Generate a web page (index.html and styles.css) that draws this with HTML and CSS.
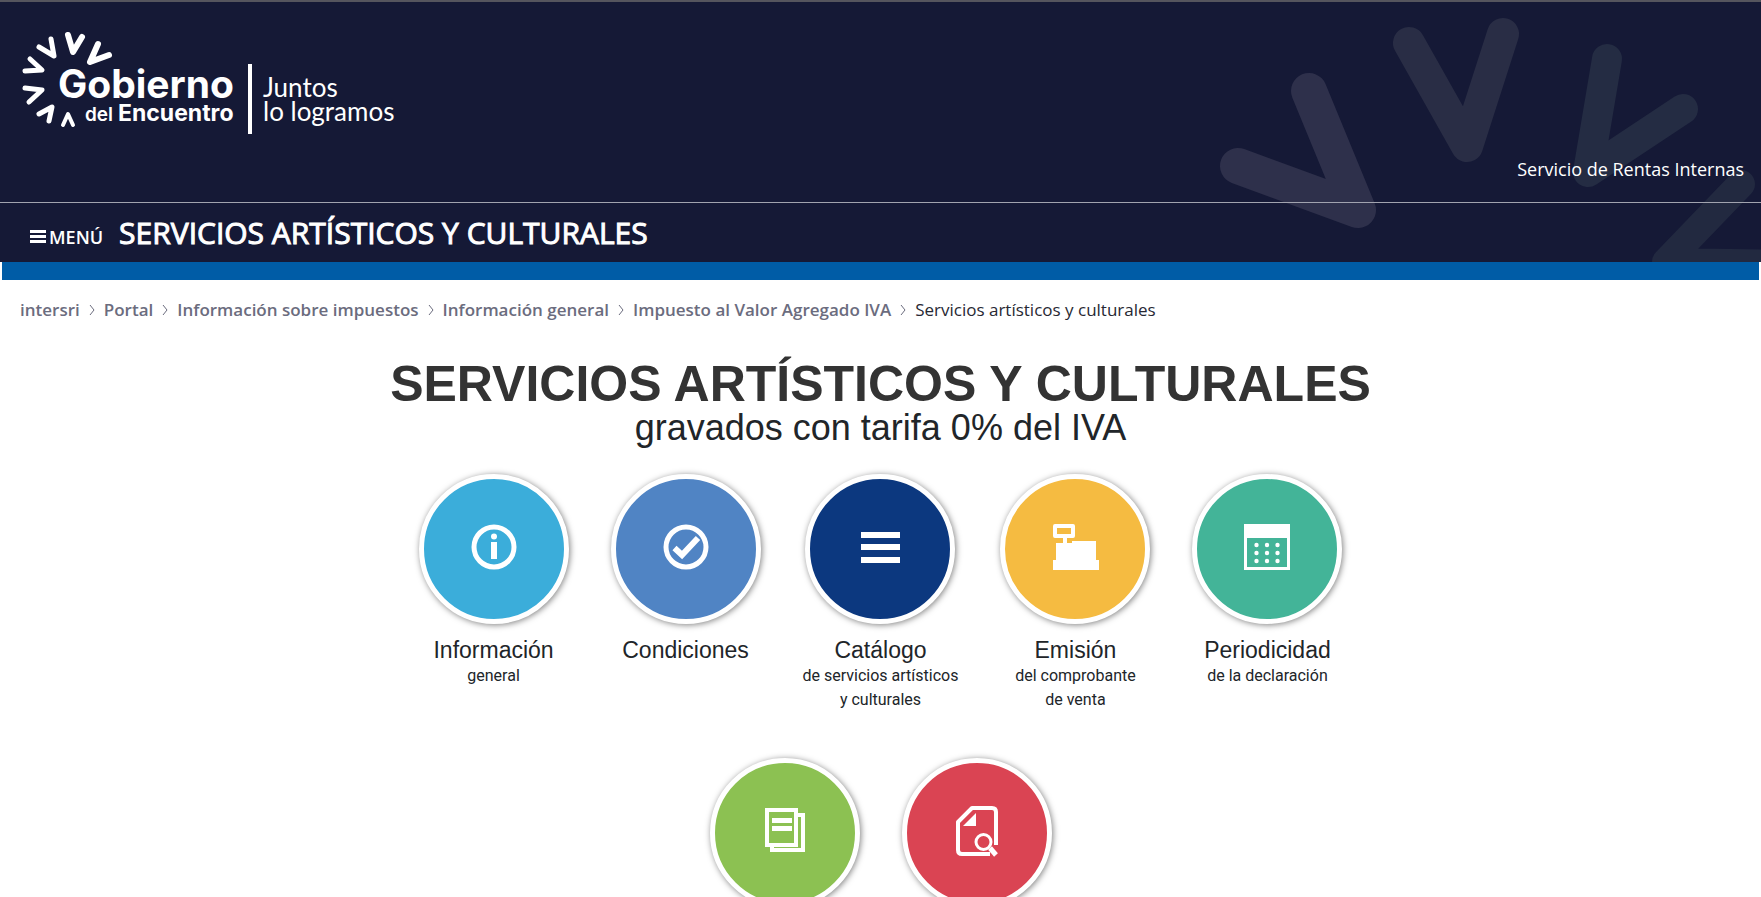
FILE: index.html
```html
<!DOCTYPE html>
<html lang="es">
<head>
<meta charset="utf-8">
<title>Servicios artísticos y culturales</title>
<link rel="stylesheet" href="styles.css">
</head>
<body>
<header class="header">
  <svg class="header-art" width="560" height="262" viewBox="1201 0 560 262" fill="none" stroke-linecap="round" stroke-linejoin="round" aria-hidden="true">
    <path stroke="#2e304b" stroke-width="36" d="M1238 166 1358 210 1309 91"/>
    <path stroke="#292d45" stroke-width="32" d="M1409 43 1467 146 1503 34"/>
    <path stroke="#242c43" stroke-width="30" d="M1607 59 1588 172 1683 109"/>
    <path stroke="#222940" stroke-width="28" d="M1741 184 1666 262 1790 264"/>
  </svg>
  <div class="header-brand">
    <svg class="logo" width="420" height="116" viewBox="0 22 420 116" role="img" aria-label="Gobierno del Encuentro, Juntos lo logramos">
      <g fill="none" stroke="#fff" stroke-width="6" stroke-linecap="round" stroke-linejoin="round">
        <path d="M68 35 73 52 82 37"/>
        <path stroke-width="5" d="M51 39 54 56 39 47"/>
        <path stroke-width="5" d="M30 59 42 70 25 71"/>
        <path stroke-width="5" d="M25 88 42 90 29 102"/>
        <path stroke-width="5" d="M39 114 52 107 49 121"/>
        <path stroke-width="4" d="M63 125 68 114 73 125"/>
        <path d="M98 44 90 62 109 55"/>
      </g>
      <text class="logo-main" x="58" y="98">Gobierno</text>
      <text class="logo-del" x="85" y="121">del</text>
      <text class="logo-sub" x="118" y="121">Encuentro</text>
      <path fill="#fff" d="M248 64h4v70h-4z"/>
      <text class="logo-motto" x="263" y="97">Juntos</text>
      <text class="logo-motto" x="263" y="121">lo logramos</text>
    </svg>
    <span class="agency">Servicio de Rentas Internas</span>
  </div>
  <div class="header-nav">
    <button class="menu" type="button">
      <svg width="16" height="14" viewBox="0 0 16 14" aria-hidden="true"><path fill="#fff" d="M0 0h16v3H0zM0 5h16v3H0zM0 10h16v3H0z"/></svg>
      MENÚ
    </button>
    <span class="section-title">SERVICIOS ARTÍSTICOS Y CULTURALES</span>
  </div>
</header>
<div class="band"></div>
<nav class="crumbs">
  <a href="#">intersri</a>
  <svg class="sep" viewBox="0 0 6 12"><path d="M1 1 5 6 1 11"/></svg>
  <a href="#">Portal</a>
  <svg class="sep" viewBox="0 0 6 12"><path d="M1 1 5 6 1 11"/></svg>
  <a href="#">Información sobre impuestos</a>
  <svg class="sep" viewBox="0 0 6 12"><path d="M1 1 5 6 1 11"/></svg>
  <a href="#">Información general</a>
  <svg class="sep" viewBox="0 0 6 12"><path d="M1 1 5 6 1 11"/></svg>
  <a href="#">Impuesto al Valor Agregado IVA</a>
  <svg class="sep" viewBox="0 0 6 12"><path d="M1 1 5 6 1 11"/></svg>
  <span>Servicios artísticos y culturales</span>
</nav>
<main class="content">
  <h1 class="title">SERVICIOS ARTÍSTICOS Y CULTURALES</h1>
  <p class="subtitle">gravados con tarifa 0% del IVA</p>
  <div class="row">
    <a class="item" href="#">
      <span class="disc sky"><svg class="icon" viewBox="0 0 48 48"><circle cx="24" cy="24" r="20" fill="none" stroke="#fff" stroke-width="5"/><circle cx="24" cy="13.500" r="3" fill="#fff"/><path fill="#fff" d="M21 19h6v17h-6z"/></svg></span>
      <span class="name">Información</span>
      <span class="detail">general</span>
    </a>
    <a class="item" href="#">
      <span class="disc blue"><svg class="icon" viewBox="0 0 48 48"><circle cx="24" cy="24" r="20" fill="none" stroke="#fff" stroke-width="5"/><path fill="none" stroke="#fff" stroke-width="6" d="M12.500 25 20 32 36 15"/></svg></span>
      <span class="name">Condiciones</span>
    </a>
    <a class="item" href="#">
      <span class="disc navy"><svg class="icon" viewBox="0 0 48 48"><path fill="#fff" d="M5 9h39v6H5zM5 21h39v6H5zM5 34h39v6H5z"/></svg></span>
      <span class="name">Catálogo</span>
      <span class="detail">de servicios artísticos<br>y culturales</span>
    </a>
    <a class="item" href="#">
      <span class="disc amber"><svg class="icon" viewBox="0 0 48 48"><path fill="#fff" fill-rule="evenodd" d="M4 1h18q2 0 2 2v10q0 2-2 2h-6v5h5v-2h24v19h3v10H2V37h3V20h7v-5H4q-2 0-2-2V3q0-2 2-2zM6 5v6h14V5z"/></svg></span>
      <span class="name">Emisión</span>
      <span class="detail">del comprobante<br>de venta</span>
    </a>
    <a class="item" href="#">
      <span class="disc teal"><svg class="icon" viewBox="0 0 48 48"><path fill="#fff" fill-rule="evenodd" d="M1 1h46v46H1zM4 15v29h40V15z"/><g fill="#fff"><circle cx="13.500" cy="22" r="2.200"/><circle cx="24" cy="22" r="2.200"/><circle cx="34.500" cy="22" r="2.200"/><circle cx="13.500" cy="30" r="2.200"/><circle cx="24" cy="30" r="2.200"/><circle cx="34.500" cy="30" r="2.200"/><circle cx="13.500" cy="38" r="2.200"/><circle cx="24" cy="38" r="2.200"/><circle cx="34.500" cy="38" r="2.200"/></g></svg></span>
      <span class="name">Periodicidad</span>
      <span class="detail">de la declaración</span>
    </a>
  </div>
  <div class="row">
    <a class="item" href="#">
      <span class="disc green"><svg class="icon" viewBox="0 0 48 48"><g fill="none" stroke="#fff" stroke-width="4"><path d="M6 3h29v35H6zM37 8h5v35H11v-5"/></g><path fill="#fff" d="M11 11h20v5H11zM11 19h20v5H11z"/></svg></span>
    </a>
    <a class="item" href="#">
      <span class="disc red"><svg class="icon" viewBox="0 0 48 52"><path fill="none" stroke="#fff" stroke-width="4" stroke-linejoin="round" d="M43 40V7q0-4-4-4H19L5 17v28q0 4 4 4h28"/><path fill="#fff" d="M23 8v13H10z"/><circle cx="30.500" cy="37" r="7.500" fill="none" stroke="#fff" stroke-width="3"/><path stroke="#fff" stroke-width="5" d="m37 43 6 7"/></svg></span>
    </a>
  </div>
</main>
</body>
</html>
```
FILE: styles.css
```css
* { box-sizing: border-box; }
body {
  margin: 0;
  height: 100vh;
  overflow: hidden;
  background: #fff;
  color: #212529;
  font-family: "Open Sans", sans-serif;
}
a { color: inherit; text-decoration: none; }
.header {
  position: relative;
  background: #151936;
  color: #fff;
  border-top: 2px solid #55555e;
}
.header-art { position: absolute; right: 0; top: -2px; }
.header-brand {
  position: relative;
  display: flex;
  justify-content: space-between;
  align-items: flex-end;
  height: 201px;
  padding: 0 17px 21px 0;
  border-bottom: 1px solid #a1a3af;
}
.logo { align-self: flex-start; margin-top: 20px; }
.logo text { fill: #fff; font-family: Inter, sans-serif; }
.logo .logo-main { font-size: 39px; font-weight: 700; }
.logo .logo-del { font-size: 19px; font-weight: 600; }
.logo .logo-sub { font-size: 23px; font-weight: 700; }
.logo .logo-motto { font-family: Lato, sans-serif; font-size: 26px; }
.agency { font-size: 18px; line-height: 24px; }
.header-nav {
  position: relative;
  display: flex;
  align-items: baseline;
  gap: 16px;
  height: 59px;
  padding: 9px 30px 0;
}
.menu {
  display: flex;
  align-items: center;
  gap: 3px;
  padding: 0;
  border: 0;
  background: none;
  color: #fff;
  font: 600 18px/24px "Open Sans", sans-serif;
}
.section-title { font-size: 30px; line-height: 42px; font-weight: 400; -webkit-text-stroke: 1px #fff; }
.band { height: 18px; margin: 0 2px; background: #005ca6; }
.crumbs {
  display: flex;
  align-items: center;
  gap: 9px;
  padding: 18px 20px 0;
  font-size: 17px;
  line-height: 24px;
  color: #272833;
}
.crumbs a { color: #6b6c7e; font-weight: 600; }
.sep { width: 6px; height: 12px; fill: none; stroke: #6b6c7e; }
.content { padding-top: 34px; text-align: center; }
.title {
  margin: 0;
  font: 700 50px/56px "Liberation Sans", Arial, sans-serif;
  color: #333;
}
.subtitle {
  margin: 0 0 30px;
  font: 36px/32px "Liberation Sans", Arial, sans-serif;
}
.row {
  display: flex;
  justify-content: center;
  gap: 42px;
  min-height: 284px;
}
.item {
  display: flex;
  flex-direction: column;
  align-items: center;
  min-width: 150px;
}
.disc {
  display: flex;
  align-items: center;
  justify-content: center;
  width: 150px;
  height: 150px;
  padding-bottom: 4px;
  border: 5px solid #fff;
  border-radius: 50%;
  box-shadow: 1px 1px 6px rgba(0, 0, 0, 0.5);
}
.icon { width: 48px; height: 48px; }
.sky { background: #3badda; }
.blue { background: #5084c4; }
.navy { background: #0c387f; }
.amber { background: #f5bb41; }
.teal { background: #43b498; }
.green { background: #8cc152; }
.red { background: #da4453; }
.red .icon { height: 52px; }
.name { margin-top: 12px; font: 23px/28px "Liberation Sans", Arial, sans-serif; }
.detail { font: 16px/24px Roboto, sans-serif; }
```
